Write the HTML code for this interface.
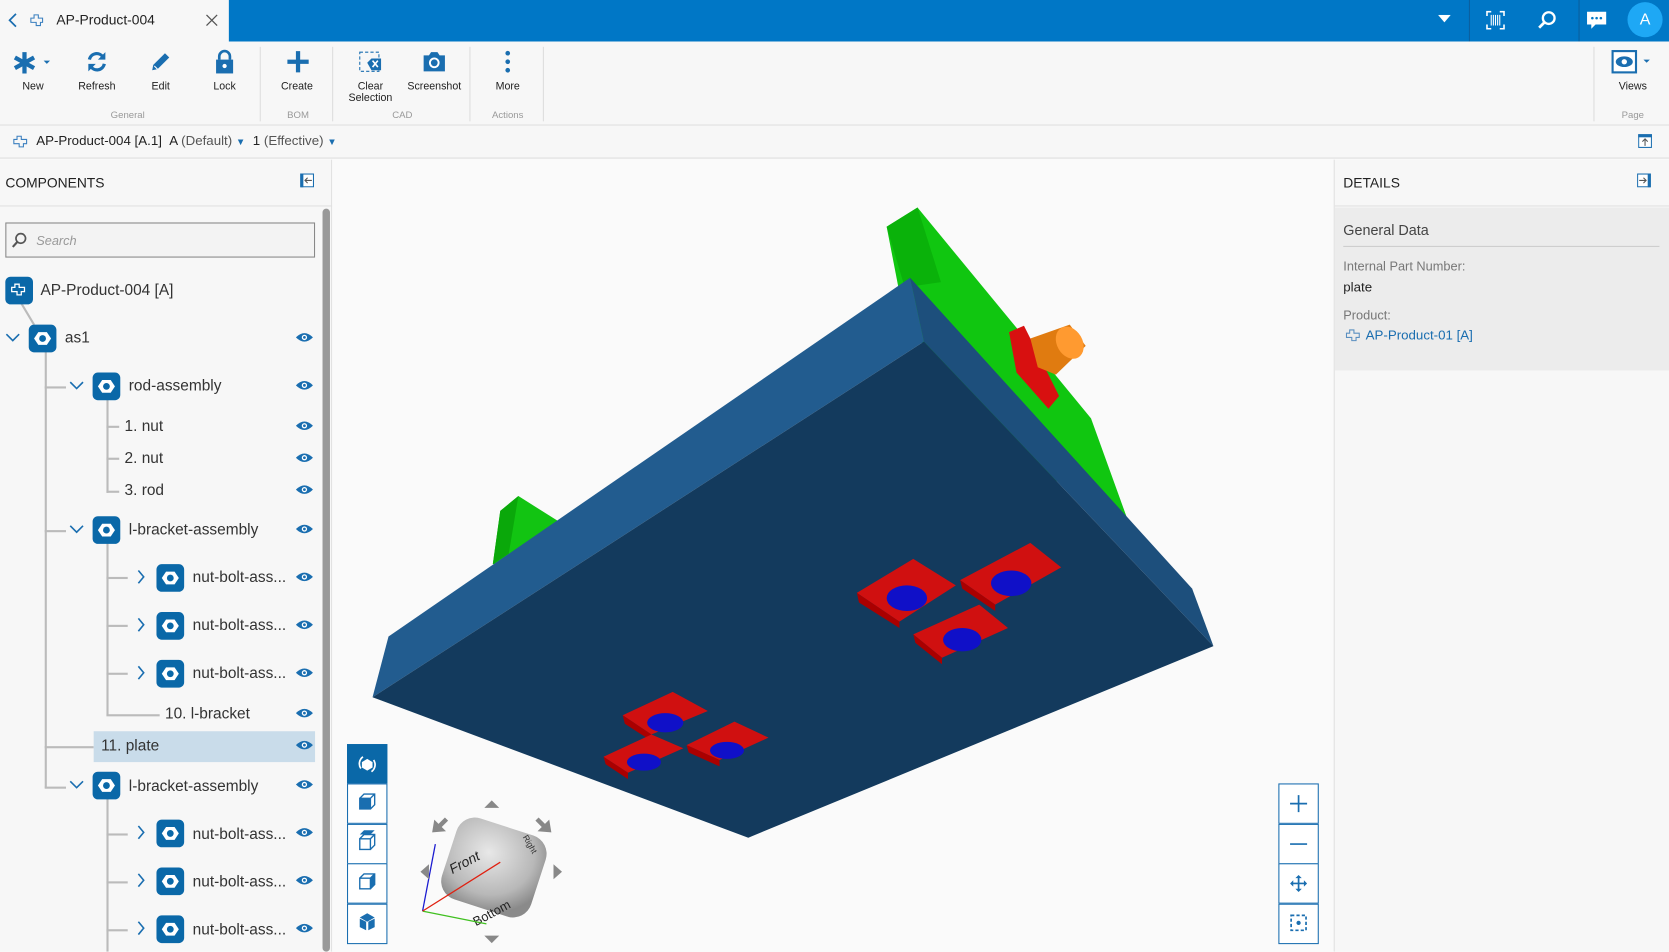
<!DOCTYPE html>
<html><head><meta charset="utf-8"><style>
*{box-sizing:border-box;margin:0;padding:0}
body{width:1669px;height:952px;overflow:hidden;background:#fafafa;font-family:"Liberation Sans",sans-serif;color:#222}
#s{position:absolute;left:0;top:0;width:1568px;height:894px;transform:scale(1.06441);transform-origin:0 0;background:#fafafa}
.a{position:absolute}
.hdr{left:0;top:0;width:1568px;height:39px;background:#0077c6}
.tab{left:0;top:0;width:215px;height:39px;background:#f7f7f7}
.rib{left:0;top:39px;width:1568px;height:79px;background:#f7f7f7;border-bottom:1px solid #ddd}
.lbl{font-size:10px;color:#222;text-align:center;width:60px}
.glb{font-size:9px;color:#999;text-align:center}
.sep{width:1px;background:#ddd;top:44px;height:70px}
.bc{left:0;top:118px;width:1568px;height:31px;background:#f7f7f7;border-bottom:1px solid #ddd;font-size:12.5px}
.lp{left:0;top:150px;width:312px;height:744px;background:#f7f7f7;border-right:1px solid #e2e2e2}
.rp{left:1253px;top:150px;width:315px;height:744px;background:#f7f7f7;border-left:1px solid #e2e2e2}
.t{font-size:14.5px;color:#333}
.ic{width:26px;height:26px;background:#0a68a8;border-radius:5px}
.eye{width:16px;height:10px}
.vl{background:#bbb;width:2px}
.hl{background:#bbb;height:2px}
.chev{width:8px;height:8px;border-right:1.6px solid #1a6eb0;border-bottom:1.6px solid #1a6eb0}
.vb{width:38px;height:38px;background:#fff;border:1px solid #1a6eb0}
</style></head><body><div id="s">
<div class="a hdr"></div>
<div class="a tab"></div>
<svg class="a" style="left:6px;top:11px" width="14" height="16"><path d="M9 2 L3 8 L9 14" stroke="#1a6eb0" stroke-width="1.6" fill="none"/></svg>
<svg class="a" style="left:27px;top:12px" width="16" height="14"><path d="M5 2h4v3h4v4h-2v3H7V9H2V5h3z" stroke="#3a7fbf" fill="none"/></svg>
<div class="a" style="left:53px;top:11px;font-size:13px">AP-Product-004</div>
<svg class="a" style="left:193px;top:13px" width="12" height="12"><path d="M1 1L11 11M11 1L1 11" stroke="#555" stroke-width="1.2"/></svg>
<svg class="a" style="left:1351px;top:14px" width="12" height="8"><path d="M0 0h12L6 7z" fill="#fff"/></svg>
<div class="a" style="left:1380px;top:0;width:1px;height:39px;background:#0a5f9e"></div>
<div class="a" style="left:1483px;top:0;width:1px;height:39px;background:#0a5f9e"></div>
<svg class="a" style="left:1396px;top:10px" width="18" height="18"><path d="M1 5V1h4M13 1h4v4M17 13v4h-4M5 17H1v-4" stroke="#fff" stroke-width="1.5" fill="none"/><path d="M5 4v10M7 4v10M9 4v10M11 4v10M13 4v10" stroke="#fff" stroke-width="1"/></svg>
<svg class="a" style="left:1444px;top:9px" width="20" height="20"><circle cx="11" cy="8" r="5.5" stroke="#fff" stroke-width="2.2" fill="none"/><path d="M7 12L2 17" stroke="#fff" stroke-width="2.6"/></svg>
<svg class="a" style="left:1490px;top:9px" width="20" height="20"><path d="M1 2h18v12H9l-4 4v-4H1z" fill="#fff"/><circle cx="6" cy="8" r="1.2" fill="#0077c6"/><circle cx="10" cy="8" r="1.2" fill="#0077c6"/><circle cx="14" cy="8" r="1.2" fill="#0077c6"/></svg>
<div class="a" style="left:1529px;top:2px;width:33px;height:33px;border-radius:50%;background:#1ea8f5;color:#fff;font-size:15px;text-align:center;line-height:33px">A</div>

<div class="a rib"></div>
<svg class="a" style="left:12px;top:47px" width="36" height="24"><path d="M11 2v20M2 7l18 10M2 17l18-10" stroke="#1a6eb0" stroke-width="4"/><path d="M29 10h6l-3 3z" fill="#1a6eb0"/></svg>
<svg class="a" style="left:80px;top:47px" width="22" height="22"><path d="M4 9a7 7 0 0 1 13-2M18 13a7 7 0 0 1-13 2" stroke="#1a6eb0" stroke-width="3" fill="none"/><path d="M19 2v7h-7zM3 20v-7h7z" fill="#1a6eb0"/></svg>
<svg class="a" style="left:140px;top:47px" width="22" height="22"><path d="M3 19l1-5L15 3l4 4L8 18z" fill="#1a6eb0"/><path d="M5 15l3 3" stroke="#fff"/></svg>
<svg class="a" style="left:201px;top:46px" width="20" height="24"><path d="M5 10V7a5 5 0 0 1 10 0v3" stroke="#1a6eb0" stroke-width="2.5" fill="none"/><rect x="2" y="10" width="16" height="13" fill="#1a6eb0"/><circle cx="10" cy="16" r="2" fill="#fff"/></svg>
<svg class="a" style="left:269px;top:47px" width="22" height="22"><path d="M11 1v20M1 11h20" stroke="#1a6eb0" stroke-width="4"/></svg>
<svg class="a" style="left:336px;top:47px" width="24" height="24"><rect x="2" y="2" width="18" height="18" stroke="#1a6eb0" stroke-dasharray="3 2" fill="none"/><path d="M9 12l4-4h9v11h-9z" fill="#1a6eb0"/><path d="M14 10l5 6M19 10l-5 6" stroke="#fff" stroke-width="1.5"/></svg>
<svg class="a" style="left:396px;top:47px" width="24" height="22"><path d="M2 5h5l2-3h6l2 3h5v15H2z" fill="#1a6eb0"/><circle cx="12" cy="12" r="5" fill="#fff"/><circle cx="12" cy="12" r="3.2" fill="#1a6eb0"/></svg>
<svg class="a" style="left:472px;top:47px" width="10" height="24"><circle cx="5" cy="3" r="2.2" fill="#1a6eb0"/><circle cx="5" cy="11" r="2.2" fill="#1a6eb0"/><circle cx="5" cy="19" r="2.2" fill="#1a6eb0"/></svg>
<div class="a lbl" style="left:1px;top:76px">New</div>
<div class="a lbl" style="left:61px;top:76px">Refresh</div>
<div class="a lbl" style="left:121px;top:76px">Edit</div>
<div class="a lbl" style="left:181px;top:76px">Lock</div>
<div class="a lbl" style="left:249px;top:76px">Create</div>
<div class="a lbl" style="left:318px;top:76px;line-height:11px">Clear<br>Selection</div>
<div class="a lbl" style="left:378px;top:76px">Screenshot</div>
<div class="a lbl" style="left:447px;top:76px">More</div>
<div class="a glb" style="left:90px;top:103px;width:60px">General</div>
<div class="a glb" style="left:250px;top:103px;width:60px">BOM</div>
<div class="a glb" style="left:348px;top:103px;width:60px">CAD</div>
<div class="a glb" style="left:447px;top:103px;width:60px">Actions</div>
<div class="a glb" style="left:1504px;top:103px;width:60px">Page</div>
<div class="a sep" style="left:244px"></div><div class="a sep" style="left:312px"></div><div class="a sep" style="left:441px"></div><div class="a sep" style="left:510px"></div><div class="a sep" style="left:1497px"></div>
<svg class="a" style="left:1514px;top:47px" width="40" height="24"><rect x="1" y="1" width="22" height="20" fill="#fff" stroke="#1a6eb0" stroke-width="2"/><ellipse cx="12" cy="11" rx="8" ry="5" fill="#1a6eb0"/><circle cx="12" cy="11" r="2.5" fill="#fff"/><path d="M30 9h6l-3 3z" fill="#1a6eb0"/></svg>
<div class="a lbl" style="left:1504px;top:76px">Views</div>

<div class="a bc"></div>
<svg class="a" style="left:11px;top:126px" width="18" height="14"><path d="M5 2h4v3h5v4h-3v3H7V9H2V5h3z" stroke="#3a7fbf" fill="none"/></svg>
<div class="a" style="left:34px;top:125px;font-size:12.5px">AP-Product-004 [A.1] &nbsp;<b style="font-weight:normal">A</b> <span style="color:#555">(Default)</span> <span style="color:#1a6eb0;font-size:9px">▼</span> &nbsp;1 <span style="color:#555">(Effective)</span> <span style="color:#1a6eb0;font-size:9px">▼</span></div>
<svg class="a" style="left:1539px;top:126px" width="13" height="13"><rect x="0.5" y="0.5" width="12" height="12" fill="#fff" stroke="#1a6eb0"/><rect x="0" y="0" width="13" height="3" fill="#1a6eb0"/><path d="M6.5 11V5M4 7l2.5-2.5L9 7" stroke="#555" fill="none"/></svg>

<div class="a lp"></div>
<div class="a" style="left:0;top:150px;width:312px;height:44px;border-bottom:1px solid #e0e0e0"></div>
<div class="a" style="left:5px;top:164px;font-size:13px;color:#222">COMPONENTS</div>
<svg class="a" style="left:282px;top:163px" width="13" height="13"><rect x="0.5" y="0.5" width="12" height="12" fill="#fff" stroke="#1a6eb0"/><rect x="0" y="0" width="3" height="13" fill="#1a6eb0"/><path d="M11 6.5H5M7 4L4.5 6.5 7 9" stroke="#555" fill="none"/></svg>
<div class="a" style="left:303px;top:196px;width:7px;height:698px;background:#999;border-radius:4px"></div>
<div class="a" style="left:5px;top:209px;width:291px;height:33px;border:1px solid #888;background:#f3f3f3"></div>
<svg class="a" style="left:10px;top:218px" width="16" height="16"><circle cx="9.5" cy="6" r="4.5" stroke="#555" stroke-width="1.6" fill="none"/><path d="M6.5 9L2 14" stroke="#555" stroke-width="2"/></svg>
<div class="a" style="left:34px;top:219px;font-size:12px;color:#999;font-style:italic">Search</div>

<!-- tree lines -->
<div class="a vl" style="left:42px;top:330px;height:410px"></div>
<div class="a vl" style="left:100px;top:375px;height:88px"></div>
<div class="a vl" style="left:100px;top:510px;height:162px"></div>
<div class="a vl" style="left:100px;top:750px;height:144px"></div>
<svg class="a" style="left:18px;top:283px" width="20" height="26"><path d="M2 2L14 22" stroke="#bbb" stroke-width="2"/></svg>
<div class="a hl" style="left:42px;top:363px;width:20px"></div>
<div class="a hl" style="left:42px;top:498px;width:20px"></div>
<div class="a hl" style="left:42px;top:701px;width:46px"></div>
<div class="a hl" style="left:42px;top:739px;width:20px"></div>
<div class="a hl" style="left:100px;top:400px;width:12px"></div>
<div class="a hl" style="left:100px;top:430px;width:12px"></div>
<div class="a hl" style="left:100px;top:461px;width:12px"></div>
<div class="a hl" style="left:100px;top:542px;width:20px"></div>
<div class="a hl" style="left:100px;top:587px;width:20px"></div>
<div class="a hl" style="left:100px;top:632px;width:20px"></div>
<div class="a hl" style="left:100px;top:671px;width:50px"></div>
<div class="a hl" style="left:100px;top:783px;width:20px"></div>
<div class="a hl" style="left:100px;top:828px;width:20px"></div>
<div class="a hl" style="left:100px;top:873px;width:20px"></div>
<div class="a" style="left:88px;top:687px;width:208px;height:29px;background:#c9dcea"></div>

<svg width="0" height="0" style="position:absolute"><defs>
<g id="hx"><rect width="26" height="26" rx="5" fill="#0a68a8"/><path d="M9 7h8l4 6-4 6H9l-4-6z" fill="#fff"/><circle cx="13" cy="13" r="3.2" fill="#0a68a8"/></g>
<g id="ey"><path d="M0 5Q8 -3 16 5Q8 13 0 5z" fill="#1a6eb0"/><circle cx="8" cy="5" r="2.5" fill="#fff"/><circle cx="8" cy="5" r="1.3" fill="#1a6eb0"/></g>
</defs></svg>

<div class="a" style="left:5px;top:260px;width:26px;height:26px;background:#0a68a8;border-radius:5px"></div>
<svg class="a" style="left:9px;top:266px" width="18" height="14"><path d="M5 1h4v3h5v4h-3v3H7V8H2V4h3z" stroke="#fff" stroke-width="1.2" fill="none"/></svg>
<div class="a t" style="left:38px;top:265px">AP-Product-004 [A]</div>

<svg class="a" style="left:0;top:300px" width="312" height="594">
<g fill="none" stroke="#1a6eb0" stroke-width="1.5"><path d="M6 14l6 6 6-6"/><path d="M66 59l6 6 6-6"/><path d="M66 194l6 6 6-6"/><path d="M66 434l6 6 6-6"/>
<path d="M130 236l5 6-5 6"/><path d="M130 281l5 6-5 6"/><path d="M130 326l5 6-5 6"/><path d="M130 476l5 6-5 6"/><path d="M130 521l5 6-5 6"/><path d="M130 566l5 6-5 6"/></g>
<use href="#hx" x="27" y="5"/><use href="#hx" x="87" y="50"/><use href="#hx" x="87" y="185"/><use href="#hx" x="147" y="230"/><use href="#hx" x="147" y="275"/><use href="#hx" x="147" y="320"/><use href="#hx" x="87" y="425"/><use href="#hx" x="147" y="470"/><use href="#hx" x="147" y="515"/><use href="#hx" x="147" y="560"/>
<use href="#ey" x="278" y="12"/><use href="#ey" x="278" y="57"/><use href="#ey" x="278" y="95"/><use href="#ey" x="278" y="125"/><use href="#ey" x="278" y="155"/><use href="#ey" x="278" y="192"/><use href="#ey" x="278" y="237"/><use href="#ey" x="278" y="282"/><use href="#ey" x="278" y="327"/><use href="#ey" x="278" y="365"/><use href="#ey" x="278" y="395"/><use href="#ey" x="278" y="432"/><use href="#ey" x="278" y="477"/><use href="#ey" x="278" y="522"/><use href="#ey" x="278" y="567"/>
</svg>
<div class="a t" style="left:61px;top:310px">as1</div>
<div class="a t" style="left:121px;top:355px">rod-assembly</div>
<div class="a t" style="left:117px;top:393px">1. nut</div>
<div class="a t" style="left:117px;top:423px">2. nut</div>
<div class="a t" style="left:117px;top:453px">3. rod</div>
<div class="a t" style="left:121px;top:490px">l-bracket-assembly</div>
<div class="a t" style="left:181px;top:535px">nut-bolt-ass...</div>
<div class="a t" style="left:181px;top:580px">nut-bolt-ass...</div>
<div class="a t" style="left:181px;top:625px">nut-bolt-ass...</div>
<div class="a t" style="left:155px;top:663px">10. l-bracket</div>
<div class="a t" style="left:95px;top:693px">11. plate</div>
<div class="a t" style="left:121px;top:731px">l-bracket-assembly</div>
<div class="a t" style="left:181px;top:776px">nut-bolt-ass...</div>
<div class="a t" style="left:181px;top:821px">nut-bolt-ass...</div>
<div class="a t" style="left:181px;top:866px">nut-bolt-ass...</div>

<!-- 3D -->
<svg class="a" style="left:0;top:0" width="1568" height="894">
<polygon points="463,530 470,480 487,466 525,490 480,530" fill="#12c412"/>
<polygon points="463,530 470,480 487,466 478,520" fill="#0aa80a"/>
<polygon points="833,213 862,195 1025,393 1060,490 900,400 845,275" fill="#10c610"/>
<polygon points="833,213 862,195 884,265 850,270" fill="#0ab20a"/>
<polygon points="948,312 962,306 995,372 985,384 955,350" fill="#d81010"/>
<polygon points="968,318 1005,305 1020,325 992,352 975,345" fill="#e07b10"/>
<ellipse cx="1005" cy="322" rx="12" ry="16" transform="rotate(-30 1005 322)" fill="#ff9a30"/>
<polygon points="350,655 365,598 855,261 868,321" fill="#225c8f"/>
<polygon points="855,261 1120,553 1140,607 868,321" fill="#1d4f7c"/>
<polygon points="350,655 868,321 1140,607 703,787" fill="#133a5d"/>
<g>
<polygon points="805,557 858,525 898,550 845,584" fill="#d01010"/><polygon points="805,557 845,584 845,590 807,566" fill="#a00"/><ellipse cx="852" cy="562" rx="19" ry="12" fill="#1010c8"/>
<polygon points="902,545 968,510 997,533 935,568" fill="#d01010"/><polygon points="902,545 935,568 935,574 904,553" fill="#a00"/><ellipse cx="950" cy="548" rx="19" ry="12" fill="#1010c8"/>
<polygon points="858,596 920,568 947,590 885,618" fill="#d01010"/><polygon points="858,596 885,618 885,624 860,604" fill="#a00"/><ellipse cx="904" cy="601" rx="18" ry="11" fill="#1010c8"/>
<polygon points="585,672 632,650 665,668 612,690" fill="#d01010"/><polygon points="585,672 612,690 612,696 587,680" fill="#a00"/><ellipse cx="625" cy="679" rx="17" ry="9" fill="#1010c8"/>
<polygon points="567,711 612,690 642,703 590,726" fill="#d01010"/><polygon points="567,711 590,726 590,732 569,718" fill="#a00"/><ellipse cx="605" cy="716" rx="16" ry="8" fill="#1010c8"/>
<polygon points="645,700 690,678 722,693 676,714" fill="#d01010"/><polygon points="645,700 676,714 676,720 647,707" fill="#a00"/><ellipse cx="683" cy="705" rx="16" ry="8" fill="#1010c8"/>
</g>
<!-- cube -->
<defs><radialGradient id="cg" cx="40%" cy="35%" r="70%"><stop offset="0" stop-color="#e8e8e8"/><stop offset="0.7" stop-color="#b8b8b8"/><stop offset="1" stop-color="#8a8a8a"/></radialGradient></defs>
<rect x="420" y="775" width="88" height="80" rx="18" fill="url(#cg)" transform="rotate(18 464 815)"/>
<text x="420" y="815" font-size="13" font-style="italic" fill="#222" transform="rotate(-28 435 808)" font-family="Liberation Sans">Front</text>
<text x="440" y="862" font-size="12" fill="#222" transform="rotate(-28 460 852)" font-family="Liberation Sans">Bottom</text>
<text x="483" y="790" font-size="8" fill="#333" transform="rotate(60 490 795)" font-family="Liberation Sans">Right</text>
<path d="M397 856L409 793" stroke="#1a1ad0" stroke-width="1.2"/><path d="M397 856L509 866" stroke="none"/><path d="M397 856L457 868" stroke="#40c020" stroke-width="1.2"/><path d="M397 856L470 810" stroke="#e02010" stroke-width="1.2"/><path d="M430 836L510 773" stroke="#e08010" stroke-width="0"/>
<g fill="#888"><path d="M455 759l7-7 7 7z"/><path d="M455 879l7 7 7-7z"/><path d="M520 812l8 7-8 7z"/><path d="M403 812l-8 7 8 7z"/><path d="M406 782l2-12 4 4 6-6 3 3-6 6 4 4z"/><path d="M518 782l-2-12-4 4-6-6-3 3 6 6-4 4z"/></g>
</svg>
<div class="a" style="left:326px;top:699px;width:38px;height:38px;background:#0a68a8"></div>
<svg class="a" style="left:335px;top:708px" width="20" height="20"><path d="M4 14a8 8 0 0 1 2-11M16 6a8 8 0 0 1-2 11" stroke="#fff" stroke-width="1.6" fill="none"/><path d="M10 5l5 3v5l-5 3-5-3V8z" fill="#fff"/></svg>
<div class="a vb" style="left:326px;top:736px"></div><div class="a vb" style="left:326px;top:774px"></div><div class="a vb" style="left:326px;top:811px"></div><div class="a vb" style="left:326px;top:849px"></div>
<svg class="a" style="left:326px;top:736px" width="38" height="152"><g stroke="#1a6eb0" stroke-width="1.3" fill="none">
<path d="M12 14h10v10H12zM12 14l4-4h10v10l-4 4M22 14l4-4" /><path d="M12 52h10v10H12zM12 52l4-4h10v10l-4 4M22 52l4-4"/><path d="M12 89h10v10H12zM12 89l4-4h10v10l-4 4M22 89l4-4"/></g>
<rect x="12" y="14" width="10" height="10" fill="#1a6eb0"/><path d="M12 48h10l4-4H16z" fill="#1a6eb0"/><path d="M22 89l4-4v10l-4 4z" fill="#1a6eb0"/>
<path d="M19 122l7 4-7 4-7-4z" fill="#1a6eb0"/><path d="M12 127l6 3v8l-6-3zM26 127l-6 3v8l6-3z" fill="#1a6eb0"/></svg>
<div class="a vb" style="left:1201px;top:736px"></div><div class="a vb" style="left:1201px;top:774px"></div><div class="a vb" style="left:1201px;top:811px"></div><div class="a vb" style="left:1201px;top:849px"></div>
<svg class="a" style="left:1201px;top:736px" width="38" height="152"><g stroke="#1a6eb0" stroke-width="1.6" fill="none"><path d="M19 11v16M11 19h16"/><path d="M11 57h16"/><path d="M19 87v14M12 94h14"/><rect x="12" y="124" width="14" height="14" stroke-dasharray="3 2"/></g><g fill="#1a6eb0"><path d="M16 89l3-3 3 3zM16 99l3 3 3-3zM14 91l-3 3 3 3zM24 91l3 3-3 3z"/><circle cx="19" cy="131" r="2"/></g></svg>

<!-- details -->
<div class="a rp"></div>
<div class="a" style="left:1254px;top:150px;width:314px;height:44px;border-bottom:1px solid #e0e0e0"></div>
<div class="a" style="left:1262px;top:164px;font-size:13px">DETAILS</div>
<svg class="a" style="left:1538px;top:163px" width="13" height="13"><rect x="0.5" y="0.5" width="12" height="12" fill="#fff" stroke="#1a6eb0"/><rect x="10" y="0" width="3" height="13" fill="#1a6eb0"/><path d="M2 6.5h6M6 4l2.5 2.5L6 9" stroke="#555" fill="none"/></svg>
<div class="a" style="left:1254px;top:195px;width:314px;height:153px;background:#ececec"></div>
<div class="a" style="left:1262px;top:209px;font-size:13.5px;color:#444">General Data</div>
<div class="a" style="left:1262px;top:231px;width:297px;height:1px;background:#ccc"></div>
<div class="a" style="left:1262px;top:243px;font-size:12px;color:#777">Internal Part Number:</div>
<div class="a" style="left:1262px;top:263px;font-size:12.5px;color:#222">plate</div>
<div class="a" style="left:1262px;top:289px;font-size:12px;color:#777">Product:</div>
<svg class="a" style="left:1263px;top:309px" width="17" height="13"><path d="M5 1h4v3h5v4h-3v3H7V8H2V4h3z" stroke="#5a8fc0" fill="none"/></svg>
<div class="a" style="left:1283px;top:308px;font-size:12.5px;color:#1a6eb0">AP-Product-01 [A]</div>
</div></body></html>
